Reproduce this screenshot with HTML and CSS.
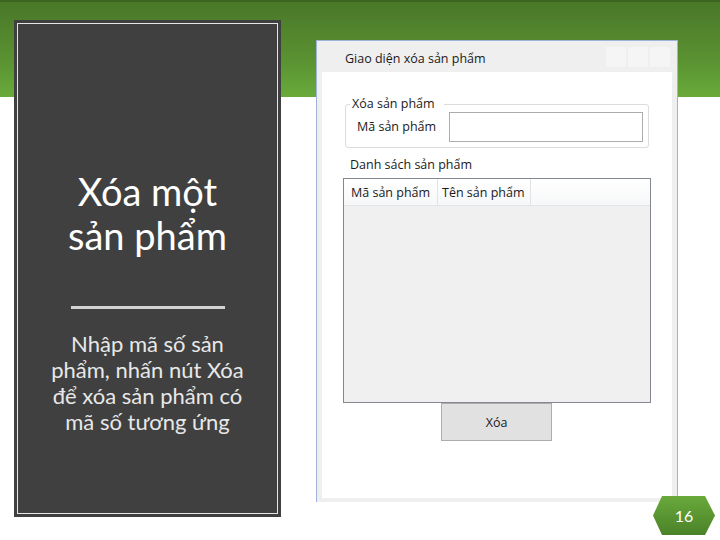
FILE: index.html
```html
<!DOCTYPE html>
<html lang="vi">
<head>
<meta charset="utf-8">
<title>Xóa một sản phẩm</title>
<link rel="stylesheet" href="styles.css">
</head>
<body>
<div class="slide">
  <section class="panel">
    <div class="panel-inner">
      <h1 class="title">Xóa một<br>sản phẩm</h1>
      <div class="rule"></div>
      <p class="desc">Nhập mã số sản<br>phẩm, nhấn nút Xóa<br>để xóa sản phẩm có<br>mã số tương ứng</p>
    </div>
  </section>
  <div class="window">
    <div class="titlebar">
      <span class="wtitle">Giao diện xóa sản phẩm</span>
      <div class="caps"><span></span><span></span><span></span></div>
    </div>
    <div class="client">
      <fieldset class="group">
        <legend>Xóa sản phẩm</legend>
        <div class="row">
          <span class="lbl">Mã sản phẩm</span>
          <div class="textbox"></div>
        </div>
      </fieldset>
      <div class="listlabel">Danh sách sản phẩm</div>
      <div class="listview">
        <div class="lvheader">
          <div class="col c1">Mã sản phẩm</div>
          <div class="col c2">Tên sản phẩm</div>
        </div>
      </div>
      <div class="btn">Xóa</div>
    </div>
  </div>
  <div class="pagenum">16</div>
</div>
</body>
</html>
```

FILE: styles.css
```css
html, body { margin: 0; padding: 0; background: #fff; }

.slide {
  position: relative;
  width: 720px;
  height: 540px;
  overflow: hidden;
  box-sizing: border-box;
  padding-left: 14px;
  display: flex;
  align-items: flex-start;
  background:
    linear-gradient(#3c6620, #3c6620) 0 0 / 100% 2px no-repeat,
    linear-gradient(to bottom, #497628 0px, #5a9232 60px, #69aa3a 97px, #ffffff 97px) 0 0 / 100% 100% no-repeat;
}

/* Left dark panel */
.panel {
  width: 267px;
  height: 497px;
  margin-top: 20px;
  padding: 3px;
  box-sizing: border-box;
  background: #404040;
  flex: none;
}
.panel-inner {
  height: 100%;
  box-sizing: border-box;
  border: 1px solid #e6e6e6;
  display: flex;
  flex-direction: column;
  align-items: center;
  padding-top: 145px;
}
.title {
  margin: 0;
  font-family: Lato, "Open Sans", sans-serif;
  font-weight: 400;
  font-size: 38px;
  line-height: 44px;
  color: #ffffff;
  text-align: center;
}
.rule {
  width: 154px;
  height: 3px;
  background: #d2d2d2;
  margin-top: 49px;
}
.desc {
  margin: 22px 0 0;
  font-family: Lato, "Open Sans", sans-serif;
  font-size: 22px;
  line-height: 26px;
  color: #e8e8e8;
  text-align: center;
}

/* Window */
.window {
  flex: none;
  width: 362px;
  height: 462px;
  margin-top: 40px;
  margin-left: 35px;
  box-sizing: border-box;
  border: 1px solid #9fb2dc;
  border-bottom: 0;
  background: #efefef;
  padding: 0 5px 4px;
  display: flex;
  flex-direction: column;
  font-family: "Open Sans", "Noto Sans", sans-serif;
  font-size: 12.5px;
  color: #1a1a1a;
}
.titlebar {
  height: 31px;
  flex: none;
  display: flex;
  align-items: flex-start;
  justify-content: space-between;
  padding-left: 23px;
  padding-right: 2px;
}
.wtitle {
  line-height: 16px;
  margin-top: 10px;
}
.caps {
  display: flex;
  gap: 2px;
  margin-top: 6px;
}
.caps span {
  width: 20px;
  height: 20px;
  background: #f5f5f5;
}
.client {
  flex: 1;
  background: #ffffff;
  display: flex;
  flex-direction: column;
  align-items: flex-start;
}
.group {
  margin: 24px 0 0 23px;
  padding: 0 5px 5px 11px;
  width: 304px;
  box-sizing: border-box;
  border: 1px solid #dcdcdc;
  border-radius: 3px;
}
.group legend {
  padding: 0 9px 0 2px;
  margin-left: -7px;
  line-height: 16px;
}
.row {
  display: flex;
  align-items: center;
  justify-content: space-between;
}
.lbl { line-height: 16px; }
.textbox {
  width: 194px;
  height: 30px;
  box-sizing: border-box;
  border: 1px solid #acacac;
  background: #fff;
}
.listlabel {
  margin: 9px 0 0 28px;
  line-height: 16px;
}
.listview {
  margin: 5px 0 0 21px;
  width: 308px;
  height: 225px;
  box-sizing: border-box;
  border: 1px solid #828790;
  background: #f0f0f0;
}
.lvheader {
  height: 26px;
  display: flex;
  background: linear-gradient(#ffffff, #f6f7f8);
  border-bottom: 1px solid #e2e3e5;
}
.col {
  display: flex;
  align-items: center;
  box-sizing: border-box;
  border-right: 1px solid #e2e3e5;
}
.c1 { width: 94px; padding-left: 7px; }
.c2 { width: 93px; padding-left: 4px; }
.btn {
  margin: 0 0 0 119px;
  width: 111px;
  height: 38px;
  box-sizing: border-box;
  border: 1px solid #adadad;
  background: #e1e1e1;
  display: flex;
  align-items: center;
  justify-content: center;
}

/* Page number badge */
.pagenum {
  position: absolute;
  left: 653px;
  top: 496px;
  width: 62px;
  height: 39px;
  clip-path: polygon(0 50%, 9px 0, 52px 0, 62px 50%, 52px 100%, 9px 100%);
  background: linear-gradient(#69a93b, #4b8229);
  color: #ffffff;
  font-family: Lato, "Open Sans", sans-serif;
  font-size: 16px;
  display: flex;
  align-items: center;
  justify-content: center;
}
```
